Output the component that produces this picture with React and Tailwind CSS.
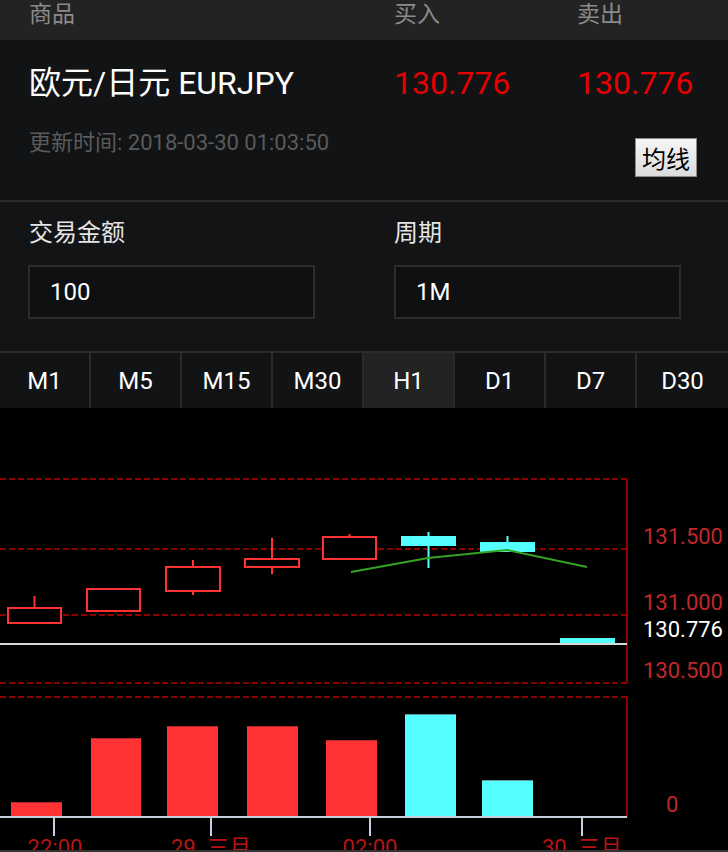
import React from "react";

const tabs = ["M1", "M5", "M15", "M30", "H1", "D1", "D7", "D30"];

// candles in page coordinates (728 wide frame)
const candles = [
  { x: 8, w: 53, top: 608, bot: 623, hi: 596, lo: 623, up: true },
  { x: 87, w: 53, top: 589, bot: 611, hi: 589, lo: 611, up: true },
  { x: 166, w: 54, top: 567, bot: 591, hi: 560, lo: 595, up: true },
  { x: 245, w: 54, top: 559, bot: 567, hi: 538, lo: 574, up: true },
  { x: 323, w: 53, top: 537, bot: 559, hi: 534, lo: 559, up: true },
  { x: 401, w: 55, top: 536, bot: 546, hi: 532, lo: 568, up: false },
  { x: 480, w: 55, top: 542, bot: 552, hi: 536, lo: 552, up: false },
  { x: 560, w: 55, top: 638, bot: 644, hi: 638, lo: 644, up: false },
];

const volumes = [
  { x: 11, w: 51, top: 802, up: true },
  { x: 91, w: 50, top: 738, up: true },
  { x: 167, w: 51, top: 726, up: true },
  { x: 247, w: 51, top: 726, up: true },
  { x: 326, w: 51, top: 740, up: true },
  { x: 405, w: 51, top: 714, up: false },
  { x: 482, w: 51, top: 780, up: false },
];

const RED = "#ff3333";
const CYAN = "#55ffff";
const GRID = "#8e0000";
const LABEL = "#c0282a";

function Chart() {
  return (
    <svg width="728" height="442" viewBox="0 408 728 442" className="block">
      <rect x="0" y="408" width="728" height="442" fill="#000" />
      {[479, 549, 615, 683, 697].map((y) => (
        <line key={y} x1="0" x2="627" y1={y} y2={y} stroke={GRID} strokeWidth="2" strokeDasharray="6 3" />
      ))}
      <line x1="627" x2="627" y1="480" y2="683" stroke={GRID} strokeWidth="2" />
      <line x1="627" x2="627" y1="698" y2="817" stroke={GRID} strokeWidth="2" />

      {candles.map((c, i) => {
        const cx = c.x + c.w / 2;
        const col = c.up ? RED : CYAN;
        return (
          <g key={i}>
            <line x1={cx} x2={cx} y1={c.hi} y2={c.lo} stroke={col} strokeWidth="2" />
            {c.up ? (
              <rect x={c.x} y={c.top} width={c.w} height={c.bot - c.top} fill="#000" stroke={col} strokeWidth="2" />
            ) : (
              <rect x={c.x} y={c.top} width={c.w} height={c.bot - c.top} fill={col} />
            )}
          </g>
        );
      })}

      <polyline points="351,572 428,558 507,550 587,567" fill="none" stroke="#33a322" strokeWidth="2" />

      <line x1="0" x2="627" y1="644" y2="644" stroke="#d8d8d8" strokeWidth="2" />

      <g fontFamily="Roboto, 'Noto Sans CJK SC', sans-serif" fontSize="22">
        <text x="723" y="544" textAnchor="end" fill={LABEL}>131.500</text>
        <text x="723" y="610" textAnchor="end" fill={LABEL}>131.000</text>
        <text x="723" y="637" textAnchor="end" fill="#ffffff">130.776</text>
        <text x="723" y="678" textAnchor="end" fill={LABEL}>130.500</text>
        <text x="666" y="812" fill={LABEL}>0</text>
      </g>

      {volumes.map((v, i) => (
        <g key={i}>
          <rect x={v.x} y={v.top} width={v.w} height={817 - v.top} fill={v.up ? RED : CYAN} />
          <line x1={v.x} x2={v.x + v.w} y1={v.top + 0.5} y2={v.top + 0.5} stroke={v.up ? "#b82a2a" : "#5a9a9a"} strokeWidth="1" />
        </g>
      ))}

      <line x1="0" x2="627" y1="817" y2="817" stroke="#c8d0e0" strokeWidth="2" />
      {[54, 211, 370, 582].map((x) => (
        <line key={x} x1={x} x2={x} y1="817" y2="836" stroke="#c8d0e0" strokeWidth="2" />
      ))}
      <g fontFamily="Roboto, 'Noto Sans CJK SC', sans-serif" fontSize="22" fill="#b81414" textAnchor="middle">
        <text x="55" y="855">22:00</text>
        <text x="211" y="855">29. 三月</text>
        <text x="370" y="855">02:00</text>
        <text x="582" y="855">30. 三月</text>
      </g>
    </svg>
  );
}

export default function App() {
  return (
    <div className="w-[728px] h-[852px] overflow-hidden bg-black font-[Roboto,'Noto_Sans_CJK_SC',sans-serif]">
      {/* header */}
      <div className="h-[40px] bg-[#232323] flex pl-[29px] text-[23px] leading-[29px] text-[#8a8a8a]">
        <span className="w-[365px]">商品</span>
        <span className="w-[183px]">买入</span>
        <span>卖出</span>
      </div>

      {/* quote row */}
      <div className="h-[160px] bg-[#121315] pl-[29px] pr-[31px] pt-[25px]">
        <div className="flex text-[32px] leading-[36px]">
          <span className="w-[365px] text-white">欧元/日元 EURJPY</span>
          <span className="w-[183px] text-[#e60000]">130.776</span>
          <span className="text-[#e60000]">130.776</span>
        </div>
        <div className="flex items-start justify-between mt-[28px]">
          <span className="text-[22px] leading-[28px] text-[#5a5a5a]">更新时间: 2018-03-30 01:03:50</span>
          <button className="mt-[9px] w-[62px] h-[39px] border border-[#8a8a8a] bg-gradient-to-b from-[#f6f6f6] to-[#dcdcdc] text-black text-[24px] leading-[36px] font-['Noto_Sans_CJK_SC',sans-serif]">
            均线
          </button>
        </div>
      </div>
      <div className="h-[2px] bg-[#2a2b2d]" />

      {/* inputs */}
      <div className="bg-[#131416] pt-[17px] pb-[32px] pl-[28px] flex text-[24px] leading-[28px] text-[#e6e6e6]">
        <div className="w-[366px]">
          <div className="pl-[1px]">交易金额</div>
          <div className="mt-[18px] w-[287px] h-[54px] border-2 border-[#2b2c2e] bg-[#0f1012] pl-[20px] flex items-center text-[24px] text-white">
            100
          </div>
        </div>
        <div className="w-[287px]">
          <div>周期</div>
          <div className="mt-[18px] w-[287px] h-[54px] border-2 border-[#2b2c2e] bg-[#0f1012] pl-[20px] flex items-center text-[24px] text-white">
            1M
          </div>
        </div>
      </div>

      {/* period tabs */}
      <div className="h-[2px] bg-[#2a2b2d]" />
      <div className="grid grid-cols-8 h-[55px] bg-[#121315]">
        {tabs.map((t, i) => (
          <div
            key={t}
            className={
              "flex items-center justify-center text-[24px] text-white " +
              (i < tabs.length - 1 ? "border-r-2 border-[#2a2b2d] " : "") +
              (t === "H1" ? "bg-[#232323]" : "")
            }
          >
            {t}
          </div>
        ))}
      </div>

      <Chart />
      <div className="h-[2px] bg-[#333333]" />
    </div>
  );
}
